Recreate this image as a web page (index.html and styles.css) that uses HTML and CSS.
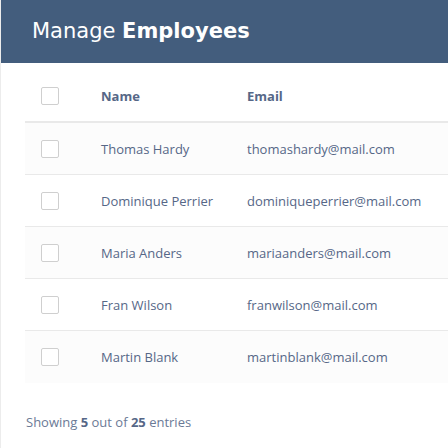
FILE: index.html
```html
<!DOCTYPE html>
<html>
<head>
<meta charset="utf-8">
<link rel="stylesheet" href="styles.css">
</head>
<body>
<div class="wrapper">
  <div class="title">
    <h2>Manage <b>Employees</b></h2>
  </div>
  <div class="content">
    <table class="table">
      <thead>
        <tr>
          <th class="check"><span class="cb"></span></th>
          <th class="name">Name</th>
          <th class="email">Email</th>
        </tr>
      </thead>
      <tbody>
        <tr class="odd"><td class="check"><span class="cb"></span></td><td class="name">Thomas Hardy</td><td class="email">thomashardy@mail.com</td></tr>
        <tr><td class="check"><span class="cb"></span></td><td class="name">Dominique Perrier</td><td class="email">dominiqueperrier@mail.com</td></tr>
        <tr class="odd"><td class="check"><span class="cb"></span></td><td class="name">Maria Anders</td><td class="email">mariaanders@mail.com</td></tr>
        <tr><td class="check"><span class="cb"></span></td><td class="name">Fran Wilson</td><td class="email">franwilson@mail.com</td></tr>
        <tr class="odd last"><td class="check"><span class="cb"></span></td><td class="name">Martin Blank</td><td class="email">martinblank@mail.com</td></tr>
      </tbody>
    </table>
    <div class="hint">Showing <b>5</b> out of <b>25</b> entries</div>
  </div>
</div>
</body>
</html>
```
FILE: styles.css
```css
html, body {
  margin: 0;
  padding: 0;
  background: #fff;
}
body {
  font-family: "Open Sans", "Noto Sans", sans-serif;
  color: #566787;
  width: 448px;
  height: 448px;
  overflow: hidden;
}
.wrapper {
  border-left: 1px solid #ececec;
  height: 448px;
  box-sizing: border-box;
}
.title {
  background: #435d7d;
  height: 63px;
  padding-left: 31px;
  display: flex;
  align-items: center;
}
.title h2 {
  margin: 0;
  color: #fff;
  font-family: "DejaVu Sans", "Open Sans", sans-serif;
  font-size: 21px;
  font-weight: 400;
  padding-bottom: 2px;
}
.title h2 b {
  font-weight: 700;
}
.content {
  padding: 8px 0 0 24px;
}
.table {
  width: 424px;
  border-collapse: separate;
  border-spacing: 0;
  font-size: 13px;
  table-layout: fixed;
}
.table th, .table td {
  padding: 0;
  text-align: left;
  vertical-align: middle;
  box-sizing: border-box;
}
.table th {
  height: 52px;
  border-bottom: 2px solid #e9e9e9;
  font-weight: 700;
  color: #566787;
}
.table td {
  height: 52px;
  border-bottom: 1px solid #e9e9e9;
}
.table tr.last td {
  border-bottom: none;
}
.table tr.odd td {
  background: #fcfcfc;
}
.check {
  width: 76px;
  padding-left: 16px !important;
}
.name {
  width: 146px;
}
.cb {
  display: block;
  width: 16px;
  height: 16px;
  border: 1px solid #cfcfcf;
  border-radius: 2px;
  background: #fff;
}
.hint {
  margin-top: 30px;
  font-size: 13px;
  color: #6b7a96;
  padding-left: 1px;
}
.hint b {
  color: #566787;
}
```
